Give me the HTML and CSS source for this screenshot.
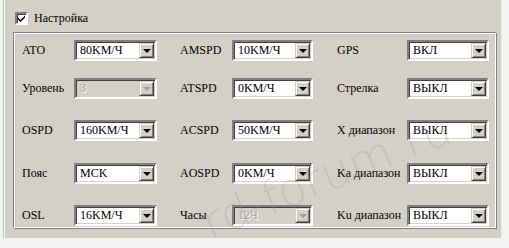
FILE: index.html
```html
<!DOCTYPE html>
<html>
  <head>
    <meta http-equiv="Content-Type" content="text/html; charset=utf-8" />
    <title>Настройка</title>
    <link rel="stylesheet" href="styles.css">
  </head>
  <body>
    <div class="panel">
      <div class="header">
        <span class="check"><svg width="9" height="9" viewBox="0 0 9 9"><path d="M1 3.5 L3.5 6 L8 1.5 L8 3.5 L3.5 8 L1 5.5 Z" fill="#000"/></svg></span>
        <span>Настройка</span>
      </div>
      <div class="group">
        <div class="grid">
          <div class="label l1">ATO</div>
          <div class="combo"><span class="value">80KM/Ч</span><span class="btn"></span></div>
          <div class="label l2">AMSPD</div>
          <div class="combo"><span class="value">10KM/Ч</span><span class="btn"></span></div>
          <div class="label l3">GPS</div>
          <div class="combo"><span class="value">ВКЛ</span><span class="btn"></span></div>

          <div class="label l1">Уровень</div>
          <div class="combo disabled"><span class="value">3</span><span class="btn"></span></div>
          <div class="label l2">ATSPD</div>
          <div class="combo"><span class="value">0KM/Ч</span><span class="btn"></span></div>
          <div class="label l3">Стрелка</div>
          <div class="combo"><span class="value">ВЫКЛ</span><span class="btn"></span></div>

          <div class="label l1">OSPD</div>
          <div class="combo"><span class="value">160KM/Ч</span><span class="btn"></span></div>
          <div class="label l2">ACSPD</div>
          <div class="combo"><span class="value">50KM/Ч</span><span class="btn"></span></div>
          <div class="label l3">X диапазон</div>
          <div class="combo"><span class="value">ВЫКЛ</span><span class="btn"></span></div>

          <div class="label l1">Пояс</div>
          <div class="combo"><span class="value">MCK</span><span class="btn"></span></div>
          <div class="label l2">AOSPD</div>
          <div class="combo"><span class="value">0KM/Ч</span><span class="btn"></span></div>
          <div class="label l3">Ka диапазон</div>
          <div class="combo"><span class="value">ВЫКЛ</span><span class="btn"></span></div>

          <div class="label l1">OSL</div>
          <div class="combo"><span class="value">16KM/Ч</span><span class="btn"></span></div>
          <div class="label l2">Часы</div>
          <div class="combo disabled"><span class="value">12Ч</span><span class="btn"></span></div>
          <div class="label l3">Ku диапазон</div>
          <div class="combo"><span class="value">ВЫКЛ</span><span class="btn"></span></div>
        </div>
      </div>
      <div class="watermark">rd-forum.ru</div>
    </div>
  </body>
</html>
```

FILE: styles.css
```css
body {
  margin: 0;
  background: #f2f2f0;
  font-family: "Liberation Serif", "DejaVu Serif", serif;
  font-size: 12px;
  color: #000;
}
.panel {
  position: relative;
  overflow: hidden;
  width: 498px;
  height: 238px;
  margin-left: 3px;
  background: #d4d0c8;
  border-left: 1px solid #98d4aa;
  box-shadow: inset 1px 0 0 #fafafa, inset -1px 0 0 #ecebe7;
}
.header {
  display: flex;
  align-items: center;
  height: 13px;
  padding: 12px 0 0 11px;
}
.check {
  display: flex;
  align-items: center;
  justify-content: center;
  width: 9px;
  height: 9px;
  margin-right: 6px;
  background: #fff;
  border: 2px solid;
  border-color: #808080 #fff #fff #808080;
  box-shadow: inset 1px 1px 0 #404040;
}
.group {
  margin: 7px 0 0 9px;
  width: 481px;
  height: 194px;
  border: 1px solid;
  border-color: #808080 #fff #fff #808080;
  box-shadow: inset 1px 1px 0 #fff, 1px 1px 0 #808080;
}
.grid {
  display: grid;
  grid-template-columns: 52px 83px 75px 81px 94px 82px;
  grid-template-rows: 38px 42px 43px 42px 21px;
  align-items: start;
  padding: 7px 0 0 8px;
}
.label {
  line-height: 21px;
  white-space: nowrap;
}
.l2 {
  padding-left: 23px;
}
.l3 {
  padding-left: 24px;
}
.combo {
  position: relative;
  display: flex;
  align-items: center;
  height: 17px;
  background: #fff;
  border: 2px solid;
  border-color: #808080 #fff #fff #808080;
  box-shadow: inset 1px 1px 0 #404040, inset -1px -1px 0 #d4d0c8;
}
.value {
  padding-left: 4px;
  line-height: 17px;
}
.btn {
  position: absolute;
  right: 1px;
  top: 1px;
  width: 15px;
  height: 15px;
  background: #d4d0c8;
  border: 1px solid;
  border-color: #d4d0c8 #404040 #404040 #d4d0c8;
  box-shadow: inset 1px 1px 0 #fff, inset -1px -1px 0 #808080;
  box-sizing: border-box;
}
.btn::after {
  content: "";
  position: absolute;
  left: 3px;
  top: 5px;
  border-left: 4px solid transparent;
  border-right: 4px solid transparent;
  border-top: 4px solid #000;
}
.combo.disabled {
  background: #d4d0c8;
}
.combo.disabled .value {
  color: #a0a0a0;
  text-shadow: 1px 1px 0 #fff;
}
.combo.disabled .btn::after {
  border-top-color: #a0a0a0;
}
.watermark {
  position: absolute;
  left: 190px;
  top: 200px;
  font-family: "DejaVu Sans", sans-serif;
  font-weight: 200;
  font-size: 46px;
  color: rgba(140, 140, 140, 0.22);
  transform: rotate(-22deg);
  transform-origin: left top;
  pointer-events: none;
  white-space: nowrap;
}
```
